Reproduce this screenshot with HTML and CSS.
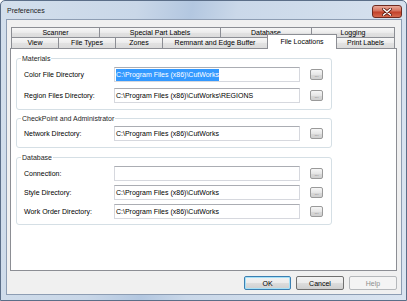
FILE: index.html
```html
<!DOCTYPE html>
<html lang="en">
<head>
  <meta charset="UTF-8" />
  <title>Preferences</title>
  <link rel="stylesheet" href="styles.css">
</head>
<body>

  <div class="window">
    <div class="titlebar">
      <span class="title">Preferences</span>
      <button class="close" aria-label="Close">
        <svg width="10" height="8" viewBox="0 0 10 8">
          <path d="M1.5 1 L8.5 7 M8.5 1 L1.5 7" stroke="#5a1a10" stroke-width="3" stroke-linecap="round" />
          <path d="M1.5 1 L8.5 7 M8.5 1 L1.5 7" stroke="#ffffff" stroke-width="1.6" stroke-linecap="round" />
        </svg>
      </button>
    </div>

    <div class="client">
      <div class="tabs">
        <div class="tab-row row-back">
          <div class="tab">Scanner</div>
          <div class="tab">Special Part Labels</div>
          <div class="tab">Database</div>
          <div class="tab">Logging</div>
        </div>
        <div class="tab-row row-front">
          <div class="tab">View</div>
          <div class="tab">File Types</div>
          <div class="tab">Zones</div>
          <div class="tab">Remnant and Edge Buffer</div>
          <div class="tab selected">File Locations</div>
          <div class="tab">Print Labels</div>
        </div>
      </div>

      <div class="panel">
        <fieldset class="group materials">
          <legend>Materials</legend>
          <div class="field">
            <label>Color File Directory</label>
            <div class="textbox"><span class="sel">C:\Program Files (x86)\CutWorks</span></div>
            <button class="browse">...</button>
          </div>
          <div class="field">
            <label>Region Files Directory:</label>
            <div class="textbox">C:\Program Files (x86)\CutWorks\REGIONS</div>
            <button class="browse">...</button>
          </div>
        </fieldset>

        <fieldset class="group checkpoint">
          <legend>CheckPoint and Administrator</legend>
          <div class="field">
            <label>Network Directory:</label>
            <div class="textbox">C:\Program Files (x86)\CutWorks</div>
            <button class="browse">...</button>
          </div>
        </fieldset>

        <fieldset class="group database">
          <legend>Database</legend>
          <div class="field">
            <label>Connection:</label>
            <div class="textbox"></div>
            <button class="browse">...</button>
          </div>
          <div class="field">
            <label>Style Directory:</label>
            <div class="textbox">C:\Program Files (x86)\CutWorks</div>
            <button class="browse">...</button>
          </div>
          <div class="field">
            <label>Work Order Directory:</label>
            <div class="textbox">C:\Program Files (x86)\CutWorks</div>
            <button class="browse">...</button>
          </div>
        </fieldset>
      </div>

      <div class="footer">
        <button class="btn default">OK</button>
        <button class="btn">Cancel</button>
        <button class="btn disabled">Help</button>
      </div>
    </div>
  </div>

</body>
</html>
```

FILE: styles.css
```css
body {
  margin: 0;
  font-family: "Liberation Sans", Arial, sans-serif;
  font-size: 7px;
  color: #000;
  background: #fff;
  overflow: hidden;
}
.window {
  width: 407px;
  height: 301px;
  box-sizing: border-box;
  padding: 0 4px 5px 5px;
  display: flex;
  flex-direction: column;
  background: linear-gradient(100deg, #d3dfec 0%, #c9d7e8 30%, #b3c7e0 42%, #cad8e9 52%, #dae4f0 100%);
  border: 1px solid #5b6e88;
  border-radius: 5px 5px 0 0;
}
.titlebar {
  height: 18px;
  display: flex;
  justify-content: space-between;
  align-items: flex-start;
}
.title {
  margin: 5px 0 0 1px;
  color: #1b1b1b;
  line-height: 9px;
}
.close {
  width: 30px;
  height: 13px;
  margin: 4px 0 0 0;
  padding: 0;
  border: 1px solid #6e2a20;
  border-radius: 3px;
  background: linear-gradient(#e9a99a, #d5705c 45%, #c2412a 55%, #d66a4f);
  display: flex;
  align-items: center;
  justify-content: center;
}
/* area cliente da janela */
.client {
  flex: 1;
  display: flex;
  flex-direction: column;
  padding: 7px 4px 4px 3px;
  background: #f0f0f0;
  border: 1px solid #8d9db3;
}
.tabs {
  margin: 0 3px 0 1px;
}
.tab-row {
  display: grid;
}
.row-back {
  grid-template-columns: 88px 121px 91px 84px;
  height: 10px;
}
.row-front {
  grid-template-columns: 47px 57px 47px 105px 69px 59px;
  height: 11px;
}
.tab {
  display: flex;
  align-items: center;
  justify-content: center;
  border-left: 1px solid #8c8e94;
  border-top: 1px solid #8c8e94;
  background: linear-gradient(#f7f7f7, #ebebeb 50%, #e2e2e2 51%, #dcdcdc);
  white-space: nowrap;
  line-height: 8px;
}
.tab:last-child {
  border-right: 1px solid #8c8e94;
}
.tab.selected {
  position: relative;
  z-index: 1;
  margin: -3px -1px -1px 0;
  border-right: 1px solid #8c8e94;
  background: #fff;
}
.panel {
  flex: 1;
  background: #fff;
  border: 1px solid #8c8e94;
  padding: 5px 0 0 5px;
}
.group {
  width: 316px;
  box-sizing: border-box;
  min-width: 0;
  margin: 0;
  padding: 4px 7px 6px 7px;
  border: 1px solid #d5dfe5;
  border-radius: 3px;
  display: flex;
  flex-direction: column;
}
.group legend {
  margin-left: -3px;
  padding: 0 1px;
  line-height: 9px;
  color: #1e1e1e;
}
.materials {
  gap: 6px;
}
.checkpoint {
  margin-top: 4px;
  padding-top: 3px;
}
.database {
  margin-top: 5px;
  padding-bottom: 5px;
  gap: 4px;
}
.field {
  display: grid;
  grid-template-columns: 90px 186px 23px;
  align-items: center;
  height: 15px;
}
.field label {
  white-space: nowrap;
}
.textbox {
  height: 15px;
  box-sizing: border-box;
  border: 1px solid #d6d8de;
  border-top-color: #abadb3;
  padding: 0 1px;
  line-height: 13px;
  white-space: nowrap;
  overflow: hidden;
}
.sel {
  display: inline-block;
  background: #3399ff;
  color: #fff;
  line-height: 12px;
}
.browse {
  justify-self: end;
  width: 13px;
  height: 11px;
  padding: 0 0 1px 0;
  border: 1px solid #9a9a9a;
  border-radius: 2px;
  background: linear-gradient(#f6f6f6, #e6e6e6 50%, #d9d9d9 51%, #d0d0d0);
  font-family: "Liberation Sans", Arial, sans-serif;
  font-size: 5px;
  line-height: 5px;
  color: #555;
  display: flex;
  align-items: flex-end;
  justify-content: center;
  box-sizing: border-box;
}
.footer {
  margin-top: 5px;
  display: flex;
  justify-content: flex-end;
  gap: 5px;
}
.btn {
  width: 48px;
  height: 14px;
  padding: 0;
  box-sizing: border-box;
  border: 1px solid #707070;
  border-radius: 2px;
  background: linear-gradient(#f2f2f2, #ebebeb 50%, #dddddd 51%, #cfcfcf);
  font-family: "Liberation Sans", Arial, sans-serif;
  font-size: 7px;
  color: #000;
}
.btn.default {
  width: 47px;
  border-color: #3c7fb1;
  box-shadow: inset 0 0 0 1px #a6e1f8;
}
.btn.disabled {
  border-color: #b5b8bb;
  background: #f4f4f4;
  color: #8d8d8d;
}
```
